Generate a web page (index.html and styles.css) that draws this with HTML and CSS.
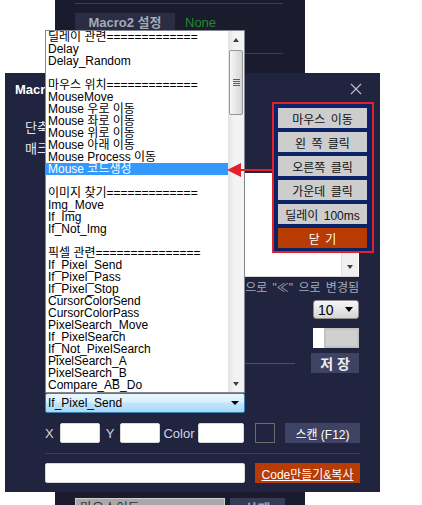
FILE: index.html
```html
<!DOCTYPE html>
<html lang="ko">
<head>
    <meta charset="UTF-8">
    <meta name="viewport" content="width=device-width, initial-scale=1.0">
    <title>Macro 설정</title>
    <link rel="stylesheet" href="styles.css">
</head>
<body>

<!-- window behind -->
<div class="win win-back">
    <div class="back-rule"></div>
    <div class="back-tabs">
        <span class="back-tab">Macro2 설정</span>
        <span class="back-state">None</span>
    </div>
    <div class="back-rule back-rule-short"></div>
    <div class="back-foot">
        <div class="back-input">마우스이동</div>
        <div class="back-btn">삭제</div>
    </div>
</div>

<!-- macro editor window -->
<div class="win win-front">
    <div class="front-head">
        <span class="front-title">Macro</span>
        <svg class="close" width="12" height="12" viewBox="0 0 12 12">
            <path d="M1 1L11 11M11 1L1 11" stroke="#b9bbc6" stroke-width="1.2" fill="none"/>
        </svg>
    </div>
    <div class="front-body">
        <div class="front-left">
            <div class="lbl">단축키</div>
            <div class="lbl">매크로 이름</div>
        </div>
        <div class="front-right">
            <div class="memo">
                <div class="memo-bar"><span class="tri-down"></span></div>
            </div>
            <div class="hint">"&lt;&lt;" 는 자동으로 "≪" 으로 변경됨</div>
            <div class="combo-sm"><span>10</span><span class="tri-down big"></span></div>
            <div class="toggle"><span class="toggle-on"></span><span class="toggle-off"></span></div>
            <div class="save-row">
                <span class="save-line"></span>
                <button class="btn-save">저 장</button>
            </div>
        </div>
    </div>
    <div class="pick-row">
        <span class="pick-lbl lbl-x">X</span>
        <span class="field f-xy"></span>
        <span class="pick-lbl lbl-y">Y</span>
        <span class="field f-xy"></span>
        <span class="pick-lbl lbl-color">Color</span>
        <span class="field f-color"></span>
        <span class="swatch"></span>
        <button class="btn-scan">스캔 (F12)</button>
    </div>
    <div class="sep"></div>
    <div class="code-row">
        <span class="field f-code"></span>
        <button class="btn-code">Code만들기&amp;복사</button>
    </div>
</div>

<!-- open command dropdown -->
<div class="dropdown">
    <div class="list">
        <ul class="items">
            <li>딜레이 관련=============</li>
            <li>Delay</li>
            <li>Delay_Random</li>
            <li>&nbsp;</li>
            <li>마우스 위치=============</li>
            <li>MouseMove</li>
            <li>Mouse 우로 이동</li>
            <li>Mouse 좌로 이동</li>
            <li>Mouse 위로 이동</li>
            <li>Mouse 아래 이동</li>
            <li>Mouse Process 이동</li>
            <li class="sel">Mouse 코드생성</li>
            <li>&nbsp;</li>
            <li>이미지 찾기=============</li>
            <li>Img_Move</li>
            <li>If_Img</li>
            <li>If_Not_Img</li>
            <li>&nbsp;</li>
            <li>픽셀 관련===============</li>
            <li>If_Pixel_Send</li>
            <li>If_Pixel_Pass</li>
            <li>If_Pixel_Stop</li>
            <li>CursorColorSend</li>
            <li>CursorColorPass</li>
            <li>PixelSearch_Move</li>
            <li>If_PixelSearch</li>
            <li>If_Not_PixelSearch</li>
            <li>PixelSearch_A</li>
            <li>PixelSearch_B</li>
            <li>Compare_AB_Do</li>
        </ul>
        <div class="sbar">
            <div class="sb-btn"><span class="tri-up"></span></div>
            <div class="sb-thumb"><span class="grip"></span></div>
            <div class="sb-track"></div>
            <div class="sb-btn"><span class="tri-down"></span></div>
        </div>
    </div>
    <div class="combo"><span>If_Pixel_Send</span><span class="tri-down"></span></div>
</div>

<!-- mouse code popup -->
<div class="callout">
    <button>마우스 이동</button>
    <button>왼 쪽 클릭</button>
    <button>오른쪽 클릭</button>
    <button>가운데 클릭</button>
    <button>딜레이 100ms</button>
    <button class="btn-close">닫 기</button>
</div>
<svg class="arrow" width="48" height="16" viewBox="0 0 48 16">
    <path d="M12 8H47" stroke="#e3212b" stroke-width="2"/>
    <path d="M1 8L15 1V15Z" fill="#e3212b"/>
</svg>

</body>
</html>
```

FILE: styles.css
```css
* {
    box-sizing: border-box;
}
html, body {
    margin: 0;
    height: 100%;
    overflow: hidden;
    background: #fff;
    font-family: 'Liberation Sans', 'Noto Sans CJK KR', sans-serif;
}
button {
    font: inherit;
    border: none;
    padding: 0;
    cursor: pointer;
}
.win {
    position: absolute;
}

/* back window */
.win-back {
    left: 55px;
    top: 0;
    width: 250px;
    height: 505px;
    background: #1a1c2e;
}
.back-rule {
    height: 1px;
    background: #393c54;
    margin: 3px 22px 0 20px;
}
.back-rule-short {
    margin: 21px 22px 0 175px;
}
.back-tabs {
    display: flex;
    align-items: center;
    height: 19px;
    margin: 9px 0 0 20px;
}
.back-tab {
    width: 100px;
    height: 19px;
    line-height: 19px;
    text-align: center;
    background: #2a2d44;
    color: #a5a9b8;
    font-size: 13px;
    font-weight: bold;
}
.back-state {
    margin-left: 10px;
    color: #1f8c26;
    font-size: 13px;
}
.back-foot {
    display: flex;
    gap: 5px;
    margin: 444px 0 0 20px;
}
.back-input {
    width: 150px;
    height: 20px;
    padding-left: 4px;
    line-height: 18px;
    background: #a8a8a8;
    border: 1px solid #cfcfcf;
    color: #333;
    font-size: 13px;
}
.back-btn {
    width: 55px;
    height: 22px;
    line-height: 22px;
    text-align: center;
    background: #363a54;
    color: #9da1b4;
    font-size: 14px;
    font-weight: bold;
}

/* front window */
.win-front {
    left: 5px;
    top: 73px;
    width: 375px;
    height: 419px;
    background: #20243f;
}
.front-head {
    height: 32px;
    display: flex;
    align-items: center;
    justify-content: space-between;
    padding: 0 18px 0 10px;
}
.front-title {
    color: #fff;
    font-size: 13px;
    font-weight: bold;
}
.front-body {
    display: flex;
    height: 318px;
}
.front-left {
    width: 240px;
    padding: 12px 0 0 20px;
}
.lbl {
    color: #e6e7ee;
    font-size: 13px;
    line-height: 21px;
}
.front-right {
    width: 115px;
    display: flex;
    flex-direction: column;
    align-items: flex-end;
    padding-right: 1px;
}
.memo {
    width: 100%;
    height: 104px;
    margin-top: 68px;
    background: #fff;
    border-bottom: 1px solid #d6d6d6;
    display: flex;
    justify-content: flex-end;
}
.memo-bar {
    width: 17px;
    margin-right: 1px;
    background: #f0f0f0;
    border-left: 1px solid #e2e2e2;
    display: flex;
    align-items: flex-end;
    justify-content: center;
    padding-bottom: 7px;
}
.hint {
    width: 100%;
    margin-top: 4px;
    display: flex;
    justify-content: flex-end;
    white-space: nowrap;
    color: #a7aabb;
    font-size: 12px;
    line-height: 14px;
    word-spacing: 2px;
}
.combo-sm {
    width: 46px;
    height: 19px;
    margin-top: 5px;
    display: flex;
    align-items: center;
    justify-content: space-between;
    padding: 0 5px 0 4px;
    border: 1px solid #8e8e8e;
    border-radius: 3px;
    background: linear-gradient(#f6f6f6, #e6e6e6 50%, #d5d5d5);
    color: #000;
    font-size: 14px;
}
.toggle {
    width: 46px;
    height: 20px;
    margin-top: 9px;
    display: flex;
}
.toggle-on {
    width: 11px;
    background: #fff;
}
.toggle-off {
    flex: 1;
    background: #d0d0d0;
    border: 2px solid #c2c2c2;
}
.save-row {
    width: 100%;
    margin-top: 5px;
    display: flex;
    align-items: center;
    gap: 16px;
}
.save-line {
    flex: 1;
    height: 1px;
    background: #4b4f6c;
}
.btn-save {
    width: 48px;
    height: 20px;
    background: #3e4363;
    color: #eceef4;
    font-size: 14px;
    font-weight: bold;
}

/* pixel pick row */
.pick-row {
    display: flex;
    align-items: center;
    height: 20px;
    padding-left: 40px;
}
.pick-lbl {
    color: #d4d6e0;
    font-size: 13px;
}
.lbl-x {
    width: 15px;
}
.lbl-y {
    width: 20px;
    text-align: center;
}
.lbl-color {
    width: 38px;
    text-align: center;
}
.field {
    height: 20px;
    background: #fff;
    border: 1px solid #d8d8d8;
    border-radius: 2px;
}
.f-xy {
    width: 40px;
}
.f-color {
    width: 46px;
}
.f-code {
    width: 200px;
}
.swatch {
    width: 20px;
    height: 20px;
    margin-left: 11px;
    border: 1px solid #6b6b6b;
}
.btn-scan {
    width: 75px;
    height: 20px;
    margin-left: 10px;
    background: #3e4363;
    color: #fff;
    font-size: 12px;
}
.sep {
    height: 1px;
    margin: 10px 20px 0 40px;
    background: #3b3f5c;
}
.code-row {
    display: flex;
    gap: 10px;
    height: 20px;
    margin: 9px 20px 0 40px;
}
.btn-code {
    width: 105px;
    background: #b73b02;
    color: #fff;
    font-size: 12px;
    text-decoration: underline;
}

/* dropdown list */
.dropdown {
    position: absolute;
    left: 45px;
    top: 30px;
    width: 200px;
}
.list {
    height: 363px;
    display: flex;
    background: #fff;
    border: 1px solid #82878f;
}
.items {
    flex: 1;
    list-style: none;
    margin: 0;
    padding: 0;
    overflow: hidden;
}
.items li {
    height: 12px;
    line-height: 12px;
    padding-left: 2px;
    font-size: 12px;
    white-space: nowrap;
    color: #000;
}
.items li.sel {
    background: #3399ff;
    color: #fff;
}
.sbar {
    width: 16px;
    display: flex;
    flex-direction: column;
    background: linear-gradient(to right, #e2e2e2, #f3f3f3 35%, #f3f3f3);
}
.sb-btn {
    height: 17px;
    display: flex;
    align-items: center;
    justify-content: center;
}
.sb-thumb {
    height: 65px;
    margin: 2px 1px 0;
    display: flex;
    align-items: center;
    justify-content: center;
    border: 1px solid #979797;
    border-radius: 2px;
    background: linear-gradient(to right, #f7f7f7, #e6e6e6 50%, #d6d6d6);
}
.grip {
    width: 7px;
    height: 7px;
    background: repeating-linear-gradient(to bottom, #5e5e5e 0 1px, transparent 1px 2px);
}
.sb-track {
    flex: 1;
}
.tri-up {
    width: 0;
    height: 0;
    border-left: 3.5px solid transparent;
    border-right: 3.5px solid transparent;
    border-bottom: 4px solid #404040;
}
.tri-down {
    width: 0;
    height: 0;
    border-left: 3.5px solid transparent;
    border-right: 3.5px solid transparent;
    border-top: 4px solid #404040;
}
.tri-down.big {
    border-left-width: 4px;
    border-right-width: 4px;
    border-top: 5px solid #000;
}
.combo {
    height: 20px;
    display: flex;
    align-items: center;
    justify-content: space-between;
    padding: 0 5px 0 2px;
    border: 1px solid #3c7fb1;
    border-radius: 2px;
    background: linear-gradient(#eaf6fd 0%, #d9f0fc 45%, #bee6fd 50%, #a7d9f5 100%);
    color: #000;
    font-size: 12px;
}
.combo .tri-down {
    border-left-width: 4px;
    border-right-width: 4px;
    border-top: 4px solid #000;
}

/* popup with arrow */
.callout {
    position: absolute;
    left: 272px;
    top: 102px;
    width: 102px;
    height: 151px;
    display: flex;
    flex-direction: column;
    gap: 4px;
    padding: 4px 5px 3px 4px;
    border: 2px solid #e3212b;
    background: #0c2266;
}
.callout button {
    height: 20px;
    background: #cdcdcd;
    color: #111;
    font-size: 12px;
    word-spacing: 2px;
}
.callout .btn-close {
    background: #b73b02;
    color: #fff;
}
.arrow {
    position: absolute;
    left: 226px;
    top: 162px;
}
```
